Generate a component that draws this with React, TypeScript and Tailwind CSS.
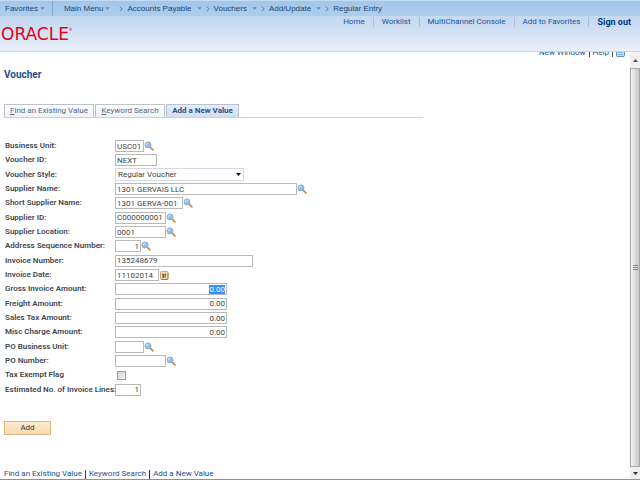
import { useEffect, useRef } from "react";
import type { ReactNode } from "react";

const menus = ["Main Menu", "Accounts Payable", "Vouchers", "Add/Update"];
const headerLinks = ["Home", "Worklist", "MultiChannel Console", "Add to Favorites"];

const inputClass =
  "block h-3 border border-[#b9b9b9] bg-white px-px text-[8px] leading-[10px] text-[#444] outline-none";

const Caret = () => (
  <svg width="5" height="3" viewBox="0 0 5 3" aria-hidden="true">
    <path d="M0.3 0.2h4.4L2.5 2.7z" fill="#5c8fc4" />
  </svg>
);

const Chevron = () => (
  <svg width="4" height="6" viewBox="0 0 4 6" fill="none" aria-hidden="true">
    <path d="M0.7 0.8L3.2 3L0.7 5.2" stroke="#4d7fb3" strokeWidth="0.9" />
  </svg>
);

const LookupButton = ({ label }: { label: string }) => (
  <button type="button" aria-label={`Look up ${label}`} className="shrink-0">
    <svg width="10" height="10" viewBox="0 0 10 10" className="block">
      <path d="M6.2 6.2L8.9 8.8" stroke="#c98a45" strokeWidth="1.7" strokeLinecap="round" />
      <circle cx="4" cy="3.9" r="3" fill="#8fc3ee" stroke="#8aa5c0" strokeWidth="0.9" />
      <path d="M2.3 3.9a1.8 1.8 0 0 1 1.8-1.7" stroke="#e8f6ff" strokeWidth="0.9" fill="none" />
    </svg>
  </button>
);

const CalendarButton = () => (
  <button type="button" aria-label="Choose a date" className="ml-px shrink-0">
    <svg width="9" height="9" viewBox="0 0 9 9" className="block">
      <rect x="0.5" y="0.5" width="7.5" height="8" rx="1" fill="#f3dcae" stroke="#c9a878" />
      <path d="M2 3.2h1.6v3.2H2M2.3 4.8h1.3M5.2 3.3v3.3M4.8 3.3h1.5" stroke="#3b3020" strokeWidth="0.8" fill="none" />
      <path d="M1 8.4h7M8 2v6" stroke="#8c6b45" strokeWidth="0.7" />
    </svg>
  </button>
);

interface RowProps {
  id: string;
  label: string;
  children: ReactNode;
}

const Row = ({ id, label, children }: RowProps) => (
  <div className="flex items-center">
    <label htmlFor={id} className="relative z-10 w-[110px] shrink-0 whitespace-nowrap text-[8px] leading-[10px] font-semibold text-[#3f4752]">
      {label}
    </label>
    {children}
  </div>
);

interface FieldProps {
  id: string;
  label: string;
  width: string;
  value?: string;
  lookup?: boolean;
}

const Field = ({ id, label, width, value = "", lookup }: FieldProps) => (
  <Row id={id} label={label}>
    <input id={id} type="text" defaultValue={value} className={`${inputClass} ${width}`} />
    {lookup && <LookupButton label={label} />}
  </Row>
);

const Header = () => (
  <header className="shrink-0 border-b border-[#cdd6e4] bg-linear-to-b from-[#b8d2ef] via-[#cbdcf2] to-[#e9f0f9]">
    <nav className="flex h-4 items-center border-t border-[#c3dcf2] bg-linear-to-b from-[#a3c7ea] to-[#acceec] font-['Liberation_Sans',sans-serif] text-[8px] leading-[10px] text-[#24466f]">
      <button type="button" className="flex items-center gap-0.5 pl-[5px]">
        Favorites <Caret />
      </button>
      <div className="ml-[7px] h-full w-px bg-[#7ea9d4]" />
      <ul className="ml-[11px] flex items-center">
        {menus.map((menu, i) => (
          <li key={menu} className="flex items-center">
            <button type="button" className={`flex items-center ${i === 0 ? "gap-0.5 pr-[9px]" : "gap-[5px] pr-1"}`}>
              {menu} <Caret />
            </button>
            <span className="mr-1 flex"><Chevron /></span>
          </li>
        ))}
        <li>
          <a href="#entry">Regular Entry</a>
        </li>
      </ul>
    </nav>

    <div className="flex h-[35px] items-start justify-between">
      <a href="#home" className="flex items-start pt-[11px] pl-px text-[#e2001a]">
        <span className="font-['DejaVu_Sans'] text-[17px] leading-[14px]">ORACLE</span>
        <span className="text-[4px] leading-[6px]">®</span>
      </a>
      <nav className="flex items-center pt-px pr-[9px] text-[8px] leading-[10px] text-[#1a5499]">
        {headerLinks.map((link) => (
          <a key={link} href="#nav" className="border-r border-[#a9bdd4] px-2">
            {link}
          </a>
        ))}
        <a href="#signout" className="pl-2 text-[9px] font-bold text-[#003a80]">
          Sign out
        </a>
      </nav>
    </div>
  </header>
);

const Scrollbar = () => (
  <div className="flex w-[10px] shrink-0 flex-col bg-[#f0f0f0]" aria-hidden="true">
    <div className="flex h-4 items-center justify-center">
      <svg width="5" height="3" viewBox="0 0 5 3">
        <path d="M0 3h5L2.5 0z" fill="#555" />
      </svg>
    </div>
    <div className="flex flex-1 flex-col items-center justify-center gap-px border border-[#a6a6a6] bg-linear-to-r from-[#f5f5f5] to-[#c4c6c9]">
      <div className="h-px w-[5px] bg-[#888]" />
      <div className="h-px w-[5px] bg-[#888]" />
      <div className="h-px w-[5px] bg-[#888]" />
    </div>
    <div className="flex h-3 items-center justify-center">
      <svg width="5" height="3" viewBox="0 0 5 3">
        <path d="M0 0h5L2.5 3z" fill="#333" />
      </svg>
    </div>
  </div>
);

const VoucherForm = () => {
  const grossRef = useRef<HTMLInputElement>(null);

  useEffect(() => {
    grossRef.current?.focus();
    grossRef.current?.select();
  }, []);

  return (
    <form className="mt-[21px] text-[8px]" onSubmit={(e) => e.preventDefault()}>
      <div className="grid min-h-[258px] auto-rows-fr pl-px">
        <Field id="bu" label="Business Unit:" width="w-[29px]" value="USC01" lookup />
        <Field id="voucher" label="Voucher ID:" width="w-[42px]" value="NEXT" />
        <Row id="style" label="Voucher Style:">
          <div className="relative">
            <select id="style" className="block h-[13px] w-[129px] appearance-none border border-[#d3dae6] bg-white pl-0.5 text-[8px] leading-[10px] text-[#444] outline-none">
              <option>Regular Voucher</option>
            </select>
            <svg width="5" height="3" viewBox="0 0 5 3" className="pointer-events-none absolute top-[5px] right-[3px]">
              <path d="M0 0h5L2.5 3z" fill="#111" />
            </svg>
          </div>
        </Row>
        <Field id="supplier" label="Supplier Name:" width="w-[182px]" value="1301 GERVAIS LLC" lookup />
        <Field id="short" label="Short Supplier Name:" width="w-[68px]" value="1301 GERVA-001" lookup />
        <Field id="supplier-id" label="Supplier ID:" width="w-[51px]" value="C000000001" lookup />
        <Field id="location" label="Supplier Location:" width="w-[51px]" value="0001" lookup />
        <Field id="address" label="Address Sequence Number:" width="w-[26px] text-right" value="1" lookup />
        <Field id="invoice" label="Invoice Number:" width="w-[138px]" value="135248679" />
        <Row id="date" label="Invoice Date:">
          <input id="date" type="text" defaultValue="11102014" className={`${inputClass} w-11`} />
          <CalendarButton />
        </Row>
        <Row id="gross" label="Gross Invoice Amount:">
          <input
            id="gross"
            ref={grossRef}
            type="text"
            defaultValue="0.00"
            className={`${inputClass} w-28 text-right selection:bg-[#3390ff] selection:text-white`}
          />
        </Row>
        <Field id="freight" label="Freight Amount:" width="w-28 text-right" value="0.00" />
        <Field id="tax" label="Sales Tax Amount:" width="w-28 text-right" value="0.00" />
        <Field id="misc" label="Misc Charge Amount:" width="w-28 text-right" value="0.00" />
        <Field id="po-bu" label="PO Business Unit:" width="w-[29px]" lookup />
        <Field id="po" label="PO Number:" width="w-[51px]" lookup />
        <Row id="exempt" label="Tax Exempt Flag">
          <input
            id="exempt"
            type="checkbox"
            className="ml-0.5 block size-[9px] appearance-none border border-[#9a9a9a] bg-linear-to-br from-[#cfd3d8] to-[#f4f4f4] checked:bg-[#3390ff]"
          />
        </Row>
        <Field id="lines" label="Estimated No. of Invoice Lines:" width="w-[26px] text-right" value="1" />
      </div>

      <button
        type="submit"
        className="mt-6 block h-[14px] w-[47px] border border-[#e0b684] bg-linear-to-b from-[#fdebd0] to-[#f8dcae] leading-[10px] text-[#333]"
      >
        Add
      </button>
    </form>
  );
};

const App = () => {
  return (
    <div className="flex h-screen flex-col overflow-hidden border-b border-[#8a949c] bg-white font-['Roboto','Liberation_Sans',sans-serif]">
      <Header />
      <div className="flex min-h-0 flex-1">
        <main className="flex flex-1 flex-col overflow-hidden pl-1">
          <div className="-mt-1 flex shrink-0 items-center justify-end gap-[3px] pr-[5px] text-[8px] leading-[10px] text-[#1a5499]">
            <a href="#new">New Window</a>
            <span className="h-2 w-px bg-[#5a4a5a]" />
            <a href="#help">Help</a>
            <span className="h-2 w-px bg-[#5a4a5a]" />
            <a href="#page" aria-label="Personalize page">
              <svg width="9" height="8" viewBox="0 0 9 8" className="block">
                <rect x="0.5" y="0.5" width="8" height="7" rx="1" fill="#c6dbf3" stroke="#5c8bc4" />
                <path d="M2 3.5h5M2 5.5h5" stroke="#7da4d3" strokeWidth="0.8" />
              </svg>
            </a>
          </div>

          <h1 className="mt-[11px] text-[10px] leading-3 font-bold text-[#27508a]">Voucher</h1>

          <nav className="mt-[23px] flex w-[419px] max-w-full shrink-0 gap-px border-b border-[#c9d1e0] text-[8px] leading-3 text-[#4d688c]">
            <a href="#find" className="w-[90px] border border-b-0 border-[#bcc3d0] bg-linear-to-b from-white to-[#f0f2f6] text-center whitespace-nowrap">
              <u>F</u>ind an Existing Value
            </a>
            <a href="#keyword" className="w-[70px] border border-b-0 border-[#bcc3d0] bg-linear-to-b from-white to-[#f0f2f6] text-center whitespace-nowrap">
              <u>K</u>eyword Search
            </a>
            <a href="#add" className="w-[73px] border border-b-0 border-[#b4c1d6] bg-linear-to-b from-[#e6edf7] to-[#d3dff1] text-center font-bold whitespace-nowrap text-[#27508a]">
              Add a New Value
            </a>
          </nav>

          <VoucherForm />

          <footer className="mt-auto flex items-center gap-[3px] text-[8px] leading-[10px] text-[#1a4f94]">
            <a href="#find">Find an Existing Value</a>
            <span className="h-[9px] w-px bg-[#8a2030]" />
            <a href="#keyword">Keyword Search</a>
            <span className="h-[9px] w-px bg-[#2b2b50]" />
            <a href="#add">Add a New Value</a>
          </footer>
        </main>
        <Scrollbar />
      </div>
    </div>
  );
};

export default App;
